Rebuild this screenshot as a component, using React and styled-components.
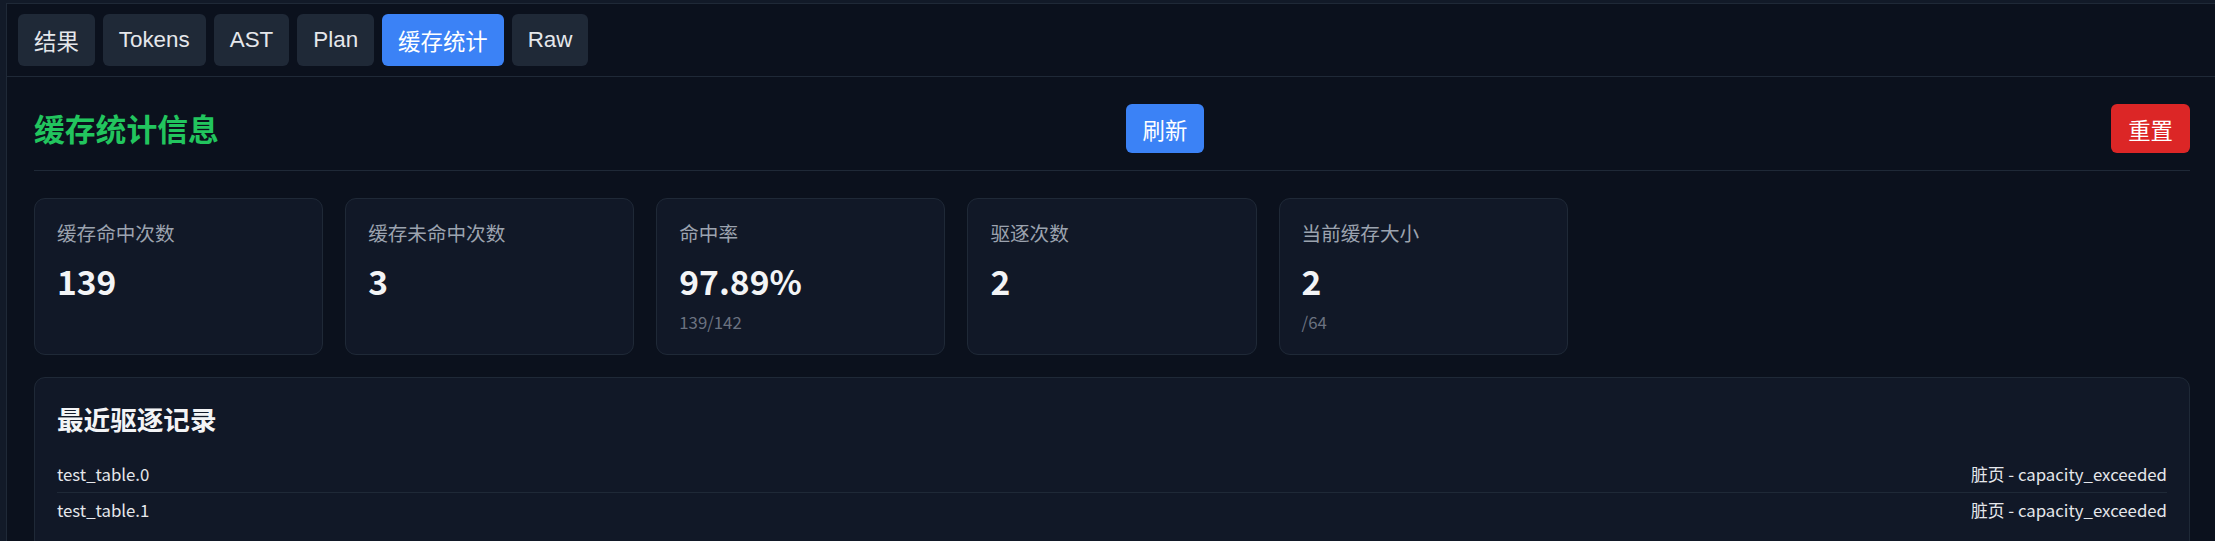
import React, { useState } from "react"
import styled, { createGlobalStyle } from "styled-components"

const GlobalStyle = createGlobalStyle`
  body {
    margin: 0;
    background: #121a28;
    font-family: "Noto Sans CJK SC", "Noto Sans", sans-serif;
    color: #e5e7eb;
  }
`

const tabs = ["结果", "Tokens", "AST", "Plan", "缓存统计", "Raw"]

const stats = [
  { label: "缓存命中次数", value: "139" },
  { label: "缓存未命中次数", value: "3" },
  { label: "命中率", value: "97.89%", sub: "139/142" },
  { label: "驱逐次数", value: "2" },
  { label: "当前缓存大小", value: "2", sub: "/64" },
]

const evictions = [
  { key: "test_table.0", reason: "脏页 - capacity_exceeded" },
  { key: "test_table.1", reason: "脏页 - capacity_exceeded" },
]

const App = () => {
  const [active, setActive] = useState("缓存统计")

  return (
    <>
      <GlobalStyle />
      <Shell>
        <Panel>
          <TabBar>
            {tabs.map(t => (
              <Tab key={t} $active={t === active} onClick={() => setActive(t)}>
                {t}
              </Tab>
            ))}
          </TabBar>
          <Content>
            <Header>
              <Title>缓存统计信息</Title>
              <ActionButton $bg="#3b82f6">刷新</ActionButton>
              <ActionButton $bg="#dc2626">重置</ActionButton>
            </Header>
            <StatGrid>
              {stats.map(s => (
                <StatCard key={s.label}>
                  <StatLabel>{s.label}</StatLabel>
                  <StatValue>{s.value}</StatValue>
                  {s.sub && <StatSub>{s.sub}</StatSub>}
                </StatCard>
              ))}
            </StatGrid>
            <Section>
              <SectionTitle>最近驱逐记录</SectionTitle>
              {evictions.map(e => (
                <EvictRow key={e.key}>
                  <span>{e.key}</span>
                  <span>{e.reason}</span>
                </EvictRow>
              ))}
            </Section>
          </Content>
        </Panel>
      </Shell>
    </>
  )
}

export default App

const Shell = styled.div`
  padding: 3px 0 0 6px;
  background: #121a28;
`

const Panel = styled.div`
  background: #0b111d;
  border-top: 1px solid #1f2937;
  border-left: 1px solid #1f2937;
  min-height: 600px;
`

const TabBar = styled.div`
  display: flex;
  gap: 8px;
  padding: 10px 11px;
  border-bottom: 1px solid #1f2937;
`

const Tab = styled.button`
  height: 52px;
  padding: 0 16px;
  border: none;
  border-radius: 6px;
  font-family: "Liberation Sans", "Noto Sans CJK SC", sans-serif;
  font-size: 22.4px;
  color: ${p => (p.$active ? "#ffffff" : "#e5e7eb")};
  background: ${p => (p.$active ? "#3b82f6" : "#1f2937")};
  cursor: pointer;
`

const Content = styled.div`
  padding: 27px 25px 0 27px;
`

const Header = styled.div`
  display: flex;
  justify-content: space-between;
  align-items: center;
  padding-bottom: 17px;
  border-bottom: 1px solid #1f2937;
  margin-bottom: 27px;
`

const Title = styled.h2`
  margin: 0;
  font-size: 30.8px;
  font-weight: 700;
  line-height: 1.3;
  color: #22c55e;
`

const ActionButton = styled.button`
  height: 49px;
  padding: 0 17px;
  border: none;
  border-radius: 6px;
  font-family: "Liberation Sans", "Noto Sans CJK SC", sans-serif;
  font-size: 22.4px;
  color: #ffffff;
  background: ${p => p.$bg};
  cursor: pointer;
`

const StatGrid = styled.div`
  display: grid;
  grid-template-columns: repeat(auto-fill, minmax(270px, 1fr));
  gap: 22px;
`

const StatCard = styled.div`
  background: #111827;
  border: 1px solid #1f2937;
  border-radius: 11px;
  padding: 19px 22px;
`

const StatLabel = styled.div`
  font-size: 19.6px;
  line-height: 1.5;
  color: #9ca3af;
`

const StatValue = styled.div`
  margin-top: 14px;
  font-size: 33.6px;
  font-weight: 700;
  line-height: 1.2;
  color: #f3f4f6;
`

const StatSub = styled.div`
  margin-top: 8px;
  font-size: 16.8px;
  line-height: 1.5;
  color: #6b7280;
`

const Section = styled.div`
  margin-top: 22px;
  background: #111827;
  border: 1px solid #1f2937;
  border-radius: 11px;
  padding: 22px;
`

const SectionTitle = styled.h3`
  margin: 0 0 20px;
  font-size: 26.6px;
  font-weight: 700;
  line-height: 1.4;
  color: #f3f4f6;
`

const EvictRow = styled.div`
  display: flex;
  justify-content: space-between;
  padding: 5px 0;
  font-size: 16.8px;
  line-height: 1.5;
  color: #e5e7eb;
  border-bottom: 1px solid #1f2937;

  &:last-child {
    border-bottom: none;
  }
`
